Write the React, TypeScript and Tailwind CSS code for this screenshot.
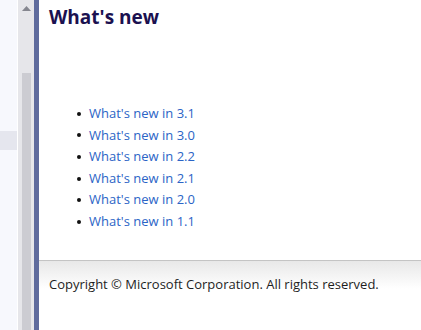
import React from "react";

const items = ["3.1", "3.0", "2.2", "2.1", "2.0", "1.1"];

export default function App() {
  return (
    <div
      className="flex h-[330px] w-[421px] overflow-hidden bg-white"
      style={{ fontFamily: '"Open Sans", "Noto Sans", sans-serif' }}
    >
      {/* left nav */}
      <div className="flex w-[17px] shrink-0 flex-col bg-[#f7f8fd]">
        <div className="h-[131px]" />
        <div className="h-[19px] bg-[#e5e6ee]" />
      </div>
      <div className="w-px shrink-0 bg-white" />
      {/* scrollbar */}
      <div className="flex w-[16px] shrink-0 flex-col items-center bg-[#e6e6ea]">
        <div className="flex h-[17px] w-full items-center justify-center">
          <svg width="9" height="5" viewBox="0 0 9 5">
            <polygon points="4.5,0 9,5 0,5" fill="#85868f" />
          </svg>
        </div>
        <div className="mt-[56px] w-[9px] flex-1 bg-[#ccccd2]" />
      </div>
      {/* blue bar */}
      <div className="w-[5px] shrink-0 bg-[#5f6b9d]" />
      {/* content */}
      <div className="flex min-w-0 flex-1 flex-col">
        <div className="h-[260px] pl-[10px] pt-[4px]">
          <h1 className="text-[19px] font-bold leading-[26px] text-[#1b1150]">What's new</h1>
          <ul className="mt-[73px] pl-[28px]">
            {items.map((v) => (
              <li key={v} className="flex h-[21.6px] items-center text-[13px] leading-[21.6px]">
                <span className="mr-[8px] h-[4px] w-[4px] rounded-full bg-[#111]" />
                <a className="text-[#2b64c6]">What's new in {v}</a>
              </li>
            ))}
          </ul>
        </div>
        <div className="flex-1 border-t border-[#c4c4c4] bg-gradient-to-b from-[#e8e8e8] to-white to-[40%] pl-[10px] pt-[14px]">
          <p className="text-[13px] leading-[18px] text-[#1e1e1e]">
            Copyright © Microsoft Corporation. All rights reserved.
          </p>
        </div>
      </div>
    </div>
  );
}
